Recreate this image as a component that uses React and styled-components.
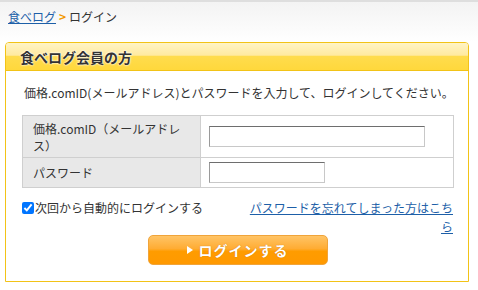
import React, { useState } from 'react';
import styled, { createGlobalStyle } from 'styled-components';

const GlobalStyle = createGlobalStyle`
  body {
    margin: 0;
    background: #fff;
    font-family: "Noto Sans CJK JP", "Liberation Sans", sans-serif;
    font-size: 12px;
    color: #333;
  }
`;

const Page = styled.div`
  width: 478px;
  height: 290px;
  overflow: hidden;
`;

const TopBar = styled.div`
  border-top: 2px solid #dedede;
  background: linear-gradient(#f3f3f3, #ffffff);
  height: 42px;
  padding: 6px 0 0 8px;
  box-sizing: border-box;
  line-height: 17px;
`;

const Crumb = styled.a`
  color: #1d5fa8;
  text-decoration: underline;
`;

const Sep = styled.span`
  color: #f39800;
  font-weight: bold;
  margin: 0 3px;
`;

const Panel = styled.div`
  margin: 0 9px 0 5px;
  border: 1px solid #f2c317;
  border-radius: 4px 4px 0 0;
  height: 240px;
  box-sizing: border-box;
`;

const PanelHeader = styled.div`
  height: 27px;
  background: linear-gradient(#fff4c6 0%, #ffeaa0 45%, #ffdc4d 50%, #ffd83c 100%);
  border-bottom: 1px solid #f2c317;
  border-radius: 3px 3px 0 0;
  padding-left: 14px;
  display: flex;
  align-items: center;
`;

const Title = styled.h2`
  margin: 0;
  font-size: 14px;
  font-weight: bold;
  color: #333;
  text-shadow: 0 0 2px #fff, 0 0 2px #fff;
`;

const Body = styled.div`
  padding: 13px 15px 0 16px;
`;

const Intro = styled.p`
  margin: 0 0 14px 2px;
  line-height: 17px;
  white-space: nowrap;
`;

const Table = styled.table`
  width: 432px;
  border-collapse: collapse;
  border: 1px solid #cfcfcf;
`;

const Label = styled.th`
  width: 157px;
  background: #e8e8e8;
  border: 1px solid #cfcfcf;
  text-align: left;
  font-weight: normal;
  padding: 3px 10px;
  line-height: 17px;
  vertical-align: middle;
`;

const Cell = styled.td`
  border: 1px solid #cfcfcf;
  padding: 0 0 0 8px;
  height: ${p => p.$h}px;
`;

const Input = styled.input`
  width: ${p => p.$w}px;
  height: 21px;
  box-sizing: border-box;
  border: 1px solid #c8c8c8;
  border-top-color: #6e6e6e;
  border-left-color: #9a9a9a;
  margin: 0;
  display: block;
`;

const Options = styled.div`
  display: flex;
  justify-content: space-between;
  margin-top: 10px;
  line-height: 19px;
`;

const Remember = styled.label`
  display: flex;
  align-items: center;
  height: 19px;
`;

const Check = styled.input`
  margin: 0 1px 0 0;
  width: 12px;
  height: 12px;
`;

const Forgot = styled.a`
  width: 204px;
  text-align: right;
  color: #1d5fa8;
  text-decoration: underline;
`;

const ButtonRow = styled.div`
  display: flex;
  justify-content: center;
  margin-top: -1px;
`;

const LoginButton = styled.button`
  width: 180px;
  height: 30px;
  border: 1px solid #f0a43a;
  border-radius: 5px;
  background: linear-gradient(#ffc466 0%, #ffac33 45%, #ff9c00 55%, #ff9900 100%);
  color: #fff;
  font-family: inherit;
  font-size: 14px;
  font-weight: bold;
  letter-spacing: 1px;
  text-shadow: 0 0 1px #c06a00;
  display: flex;
  align-items: center;
  justify-content: center;
  gap: 6px;
  cursor: pointer;
`;

const App = () => {
  const [remember, setRemember] = useState(true);

  return (
    <Page>
      <GlobalStyle />
      <TopBar>
        <Crumb href="#">食べログ</Crumb>
        <Sep>&gt;</Sep>
        <span>ログイン</span>
      </TopBar>
      <Panel>
        <PanelHeader>
          <Title>食べログ会員の方</Title>
        </PanelHeader>
        <Body>
          <Intro>価格.comID(メールアドレス)とパスワードを入力して、ログインしてください。</Intro>
          <Table>
            <tbody>
              <tr>
                <Label>価格.comID（メールアドレス）</Label>
                <Cell $h={41}><Input $w={216} type="text" /></Cell>
              </tr>
              <tr>
                <Label>パスワード</Label>
                <Cell $h={29}><Input $w={116} type="password" /></Cell>
              </tr>
            </tbody>
          </Table>
          <Options>
            <Remember>
              <Check type="checkbox" checked={remember} onChange={() => setRemember(!remember)} />
              次回から自動的にログインする
            </Remember>
            <Forgot href="#">パスワードを忘れてしまった方はこちら</Forgot>
          </Options>
          <ButtonRow>
            <LoginButton>
              <svg width="6" height="8" viewBox="0 0 6 8"><path d="M0 0 L6 4 L0 8 Z" fill="#fff" /></svg>
              ログインする
            </LoginButton>
          </ButtonRow>
        </Body>
      </Panel>
    </Page>
  );
};

export default App;
